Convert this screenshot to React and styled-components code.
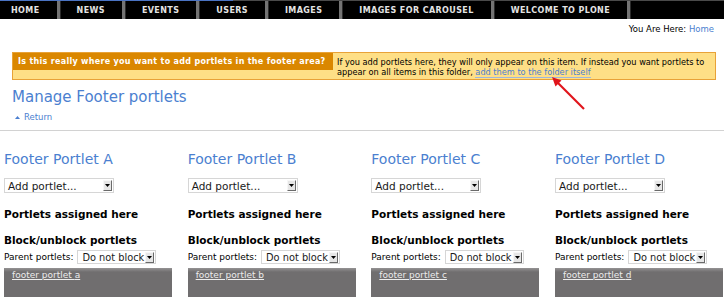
import React from 'react';
import styled, { createGlobalStyle } from 'styled-components';

const GlobalStyle = createGlobalStyle`
  html, body {
    margin: 0;
    padding: 0;
    overflow: hidden;
    background: #fff;
  }
  body {
    font-family: "DejaVu Sans", Verdana, sans-serif;
    color: #000;
  }
`;

const BLUE = '#4b7fd0';

const Page = styled.div`
  position: relative;
  width: 724px;
  height: 297px;
  overflow: hidden;
`;

const Nav = styled.ul`
  position: relative;
  display: flex;
  margin: 0;
  padding: 0;
  list-style: none;
  height: 19px;
  background: #000;
  &::before {
    content: '';
    position: absolute;
    left: 0;
    top: 0;
    right: 0;
    height: 1px;
    background: linear-gradient(to right, #4a73c2 233px, #4a4a4a 233px);
  }
`;

const NavItem = styled.li`
  display: flex;
  align-items: center;
  padding: 1px 17px 0 ${(p) => (p.$first ? 11 : 17)}px;
  border-right: 3px solid #747474;
  box-shadow: 1px 0 0 #2c2c2c;
  color: #e4e4e4;
  font-size: 8px;
  font-weight: bold;
  letter-spacing: 0.4px;
  text-transform: uppercase;
  white-space: nowrap;
`;

const Breadcrumb = styled.div`
  padding: 4px 10px 0 0;
  text-align: right;
  font-size: 8.5px;
  line-height: 12px;
  a {
    color: ${BLUE};
    text-decoration: none;
  }
`;

const Warning = styled.div`
  display: flex;
  align-items: flex-start;
  margin: 17px 8px 0 12px;
  background: #fedf86;
  border: 1px solid #e8a238;
`;

const WarningLabel = styled.div`
  flex: none;
  box-sizing: border-box;
  width: 320px;
  padding: 0 0 0 5px;
  background: #da8700;
  color: #fff;
  font-size: 8px;
  font-weight: bold;
  letter-spacing: 0.3px;
  line-height: 17px;
  white-space: nowrap;
`;

const WarningText = styled.div`
  margin-left: 4px;
  padding: 4px 0 2px;
  font-size: 8.2px;
  line-height: 10px;
  white-space: nowrap;
  a {
    color: ${BLUE};
    text-decoration: none;
    border-bottom: 1px solid #9fb7dc;
  }
`;

const Title = styled.h1`
  margin: 8px 0 0 12px;
  font-size: 15px;
  line-height: 18px;
  font-weight: normal;
  color: ${BLUE};
`;

const Back = styled.a`
  display: flex;
  align-items: center;
  gap: 4px;
  margin: 5px 0 0 15px;
  font-size: 8.5px;
  line-height: 12px;
  color: ${BLUE};
  text-decoration: none;
`;

const Rule = styled.hr`
  margin: 7px 0 0;
  border: 0;
  border-top: 1px solid #d2d2d2;
`;

const Columns = styled.div`
  display: grid;
  grid-template-columns: repeat(4, 168px);
  column-gap: 15.67px;
  margin-top: 20px;
  padding-left: 4px;
`;

const Column = styled.div`
  display: flex;
  flex-direction: column;
  align-items: flex-start;
`;

const ColTitle = styled.h2`
  margin: 0 0 10px;
  font-size: 14px;
  line-height: 17px;
  font-weight: normal;
  color: ${BLUE};
`;

const Select = styled.div`
  display: flex;
  align-items: center;
  justify-content: space-between;
  box-sizing: border-box;
  width: ${(p) => p.$w}px;
  height: ${(p) => p.$h}px;
  padding: 0 1px 0 ${(p) => p.$pad}px;
  border: 1px solid #d6d6d6;
  background: #fff;
  color: #1a1a1a;
  font-size: ${(p) => p.$size}px;
  white-space: nowrap;
`;

const SelectArrow = styled.span`
  display: flex;
  align-items: center;
  justify-content: center;
  box-sizing: border-box;
  width: 9px;
  height: 11px;
  border: 1px solid;
  border-color: #f6f6f6 #6a6a6a #6a6a6a #f6f6f6;
  background: #e6e6e6;
`;

const SubTitle = styled.h3`
  margin: ${(p) => p.$top}px 0 0;
  font-size: 10.5px;
  line-height: 13px;
  font-weight: bold;
`;

const ParentRow = styled.div`
  display: flex;
  align-items: center;
  gap: 4px;
  margin-top: 3px;
  font-size: 9px;
`;

const PortletBox = styled.div`
  align-self: stretch;
  height: 40px;
  margin-top: 4px;
  padding: 2px 8px;
  background: linear-gradient(#959394, #706e6f 4px);
  font-size: 9px;
  line-height: 11px;
  a {
    color: #ececec;
    text-decoration: underline;
  }
`;

const Pointer = styled.svg`
  position: absolute;
  left: 545px;
  top: 70px;
`;

function FakeSelect({ label, w, h, size, pad }) {
  return (
    <Select $w={w} $h={h} $size={size} $pad={pad}>
      <span>{label}</span>
      <SelectArrow>
        <svg width="5" height="3" viewBox="0 0 5 3">
          <path d="M0 0h5L2.5 3z" fill="#000" />
        </svg>
      </SelectArrow>
    </Select>
  );
}

const navItems = ['Home', 'News', 'Events', 'Users', 'Images', 'Images for carousel', 'Welcome to Plone'];
const portlets = ['A', 'B', 'C', 'D'];

export default function App() {
  return (
    <Page>
      <GlobalStyle />
      <Nav>
        {navItems.map((item, i) => (
          <NavItem key={item} $first={i === 0}>
            {item}
          </NavItem>
        ))}
      </Nav>
      <Breadcrumb>
        You Are Here: <a href="#">Home</a>
      </Breadcrumb>
      <Warning>
        <WarningLabel>Is this really where you want to add portlets in the footer area?</WarningLabel>
        <WarningText>
          If you add portlets here, they will only appear on this item. If instead you want portlets to
          <br />
          appear on all items in this folder, <a href="#">add them to the folder itself</a>
        </WarningText>
      </Warning>
      <Title>Manage Footer portlets</Title>
      <Back href="#">
        <svg width="5" height="3" viewBox="0 0 5 3">
          <path d="M2.5 0L5 3H0z" fill={BLUE} />
        </svg>
        Return
      </Back>
      <Rule />
      <Columns>
        {portlets.map((letter) => (
          <Column key={letter}>
            <ColTitle>Footer Portlet {letter}</ColTitle>
            <FakeSelect label="Add portlet..." w={110} h={15} size={10.5} pad={3} />
            <SubTitle $top={15}>Portlets assigned here</SubTitle>
            <SubTitle $top={13}>Block/unblock portlets</SubTitle>
            <ParentRow>
              Parent portlets:
              <FakeSelect label="Do not block" w={79} h={14} size={9.8} pad={4} />
            </ParentRow>
            <PortletBox>
              <a href="#">footer portlet {letter.toLowerCase()}</a>
            </PortletBox>
          </Column>
        ))}
      </Columns>
      <Pointer width="50" height="50" viewBox="0 0 50 50">
        <line x1="39" y1="39" x2="12" y2="12" stroke="#e0141b" strokeWidth="2.2" />
        <path d="M7 7L16.5 10.5L10.5 16.5z" fill="#e0141b" />
      </Pointer>
    </Page>
  );
}
